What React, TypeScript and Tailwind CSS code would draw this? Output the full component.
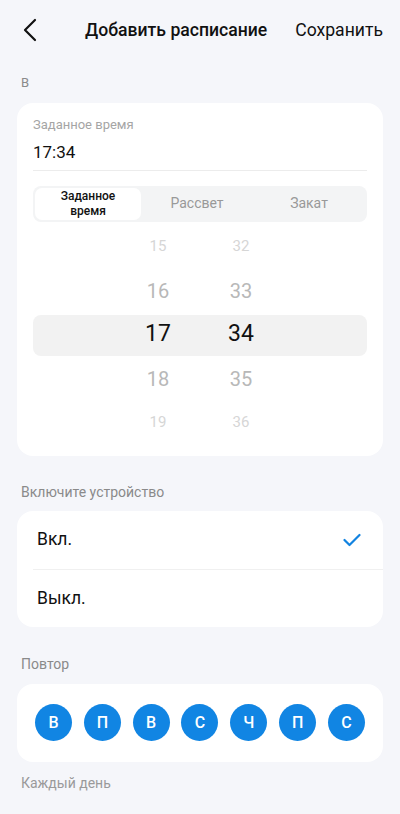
const font = { fontFamily: 'Roboto, "Noto Sans", sans-serif' }

const hours = [
  { h: '15', m: '32', cls: 'text-[15px] text-[#d6d6d6]' },
  { h: '16', m: '33', cls: 'text-[20px] text-[#b8b8b8]' },
  { h: '17', m: '34', cls: 'text-[23px] text-[#111]' },
  { h: '18', m: '35', cls: 'text-[20px] text-[#b8b8b8]' },
  { h: '19', m: '36', cls: 'text-[15px] text-[#d6d6d6]' },
]

const days = ['В', 'П', 'В', 'С', 'Ч', 'П', 'С']

export default function App() {
  return (
    <div style={font} className="min-h-[814px] w-[400px] bg-[#f5f6fa] text-[#111]">
      <header className="flex h-[60px] items-center px-[22px]">
        <svg width="16" height="24" viewBox="0 0 16 24" className="shrink-0">
          <path d="M13 2 L3 12 L13 22" fill="none" stroke="#111" strokeWidth="2.2" strokeLinecap="round" strokeLinejoin="round" />
        </svg>
        <h1 className="ml-[47px] text-[17.6px] font-medium">Добавить расписание</h1>
        <button className="ml-auto mr-[-5px] text-[17.6px]">Сохранить</button>
      </header>

      <div className="px-[17px]">
        <p className="px-[4px] pt-[13px] pb-[10px] text-[13px] text-[#8a8a8a]">В</p>

        <section className="rounded-[16px] bg-white px-[16px] pt-[12px] pb-[11px]">
          <p className="text-[13px] text-[#a5a5a5]">Заданное время</p>
          <p className="mt-[6px] pb-[4px] text-[17px]">17:34</p>
          <div className="h-px bg-[#ececec]" />
          <div className="mt-[15px] flex h-[36px] items-stretch rounded-[8px] bg-[#f3f4f5] p-[2px]">
            <div className="flex w-[106px] flex-col items-center justify-center rounded-[7px] bg-white text-[12px] leading-[15px] font-medium">
              <span>Заданное</span>
              <span>время</span>
            </div>
            <div className="flex flex-1 items-center justify-center text-[14px] text-[#999]">Рассвет</div>
            <div className="flex flex-1 items-center justify-center text-[14px] text-[#999]">Закат</div>
          </div>

          <div className="relative mt-[3px]">
            <div className="absolute left-0 right-0 top-[90px] h-[41px] rounded-[8px] bg-[#f2f2f2]" />
            <div className="relative flex flex-col">
              {hours.map((r) => (
                <div key={r.h} className={`flex h-[44px] items-center ${r.cls}`}>
                  <span className="ml-[108px] w-[34px] text-center">{r.h}</span>
                  <span className="ml-[49px] w-[34px] text-center">{r.m}</span>
                </div>
              ))}
            </div>
          </div>
        </section>

        <p className="px-[4px] pt-[26px] pb-[8px] text-[14px] text-[#8a8a8a]">Включите устройство</p>
        <section className="rounded-[16px] bg-white">
          <div className="flex h-[58px] items-center pl-[20px] pr-[22px] text-[17.5px]">
            <span>Вкл.</span>
            <svg width="18" height="14" viewBox="0 0 18 14" className="ml-auto">
              <path d="M1.5 7 L6.5 12 L16.5 2" fill="none" stroke="#1283e0" strokeWidth="2.2" strokeLinecap="round" strokeLinejoin="round" />
            </svg>
          </div>
          <div className="ml-[16px] h-px bg-[#f0f0f0]" />
          <div className="flex h-[57px] items-center pl-[20px] text-[17.5px]">
            <span>Выкл.</span>
          </div>
        </section>

        <p className="px-[4px] pt-[27px] pb-[9px] text-[14px] text-[#8a8a8a]">Повтор</p>
        <section className="flex h-[78px] items-center justify-between rounded-[16px] bg-white px-[18px]">
          {days.map((d, i) => (
            <div key={i} className="flex h-[37px] w-[37px] items-center justify-center rounded-full bg-[#1185e3] text-[16px] font-medium text-white">
              {d}
            </div>
          ))}
        </section>

        <p className="px-[4px] pt-[11px] text-[14px] text-[#9a9a9a]">Каждый день</p>
      </div>
    </div>
  )
}
